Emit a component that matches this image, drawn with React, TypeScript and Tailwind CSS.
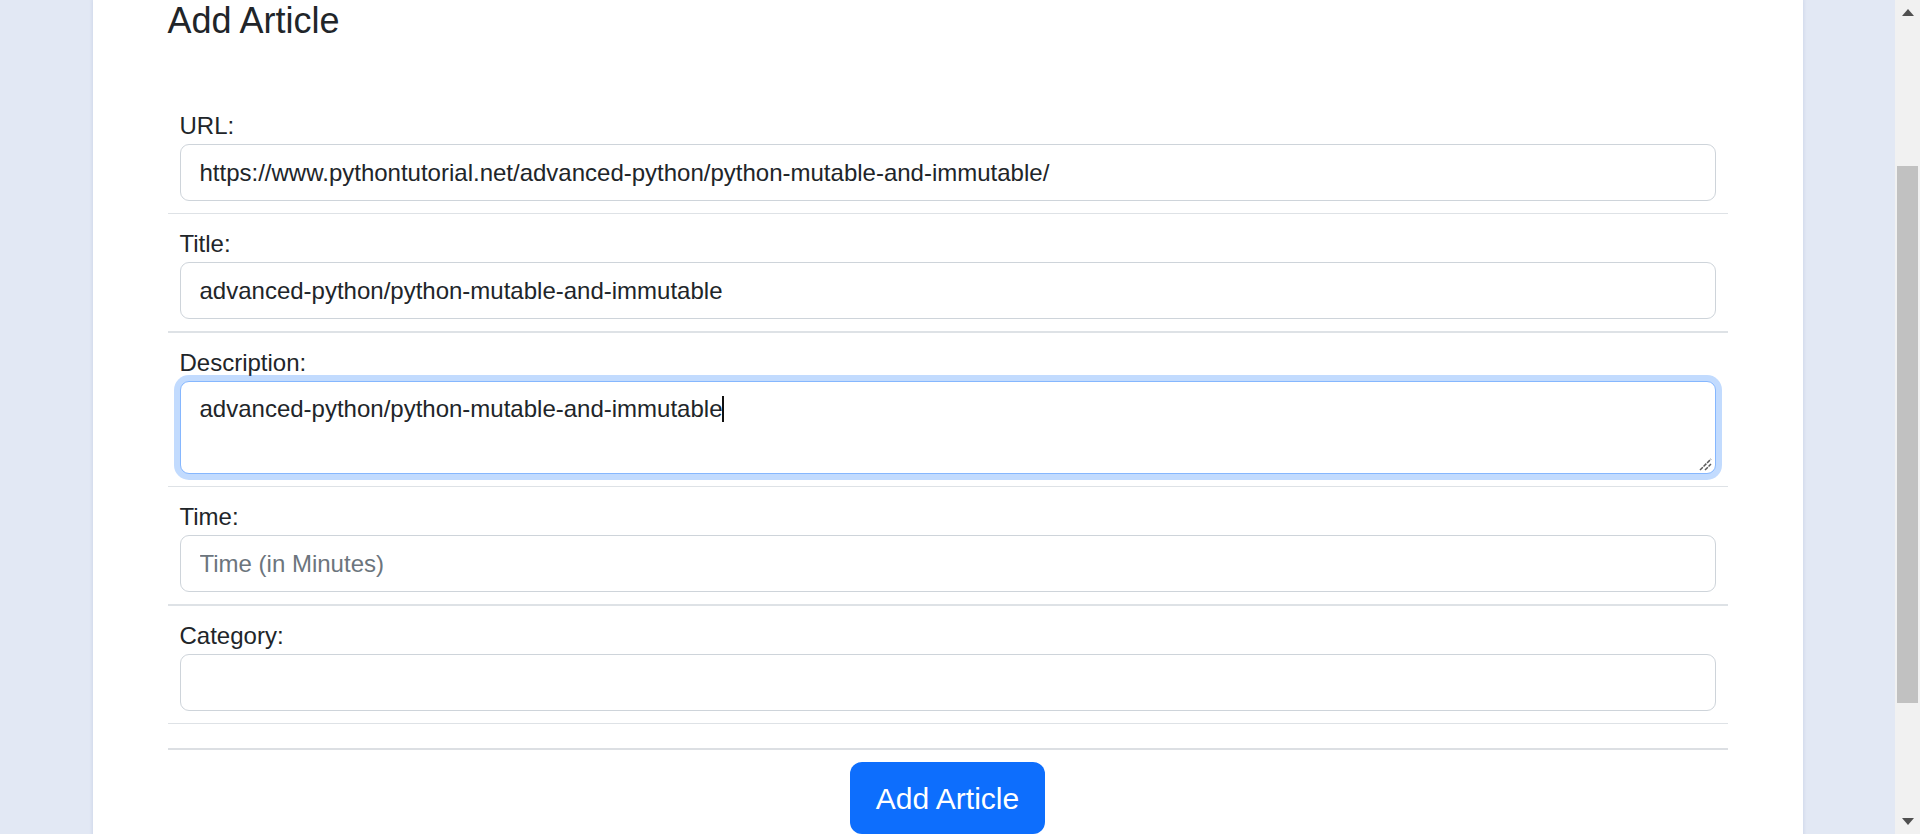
const App = () => {
  const fields = [
    {
      label: "URL:",
      value: "https://www.pythontutorial.net/advanced-python/python-mutable-and-immutable/",
      placeholder: "",
      border: "border-b",
    },
    {
      label: "Title:",
      value: "advanced-python/python-mutable-and-immutable",
      placeholder: "",
      border: "border-b-2",
    },
  ];
  const fieldsAfter = [
    { label: "Time:", value: "", placeholder: "Time (in Minutes)", border: "border-b-2" },
    { label: "Category:", value: "", placeholder: "", border: "border-b" },
  ];
  const description = "advanced-python/python-mutable-and-immutable";

  const inputClass =
    "w-full h-[57px] px-[19px] border border-[#ced4da] rounded-[9px] bg-white text-[24px] leading-[36px] text-[#212529] placeholder:text-[#6c757d] outline-none";

  return (
    <div className="h-[834px] overflow-hidden flex font-['Liberation_Sans',Arial,sans-serif] text-[#212529]">
      <div className="flex-1 bg-[#e2e8f4]">
        <div className="mx-auto w-[1710px] h-[880px] bg-white px-[75px] shadow-[0_0_4px_rgba(40,70,150,0.15)]">
          <h2 className="-mt-[1px] text-[36px] leading-[43px] font-normal mb-[54px]">Add Article</h2>

          <div className="flex flex-col">
            {fields.map((f, i) => (
              <div key={i} className={`px-[12px] pt-[12px] pb-[12px] ${f.border} border-[#dee2e6]`}>
                <label className="block text-[24px] leading-[36px]">{f.label}</label>
                <input className={inputClass} defaultValue={f.value} placeholder={f.placeholder} />
              </div>
            ))}

            <div className="px-[12px] pt-[12px] pb-[12px] border-b border-[#dee2e6]">
              <label className="block text-[24px] leading-[36px]">Description:</label>
              <div className="relative">
                <textarea
                  rows={2}
                  defaultValue={description}
                  className="block w-full h-[93px] resize-none px-[19px] py-[9px] border border-[#86b7fe] rounded-[9px] bg-white text-[24px] leading-[36px] text-[#212529] outline-none shadow-[0_0_0_6px_rgba(13,110,253,0.25)]"
                />
                <div className="absolute inset-0 px-[20px] py-[10px] text-[24px] leading-[36px] pointer-events-none">
                  <span className="invisible">{description}</span>
                  <span className="inline-block w-[2px] h-[26px] bg-[#111] align-[-5px]"></span>
                </div>
                {/* resize grip */}
                <svg
                  className="absolute right-[4px] bottom-[3px] pointer-events-none"
                  width="13"
                  height="13"
                  viewBox="0 0 13 13"
                >
                  <line x1="1" y1="12" x2="12" y2="1" stroke="#5a5a5a" strokeWidth="1.5" strokeDasharray="4 1" />
                  <line x1="6" y1="12" x2="12" y2="6" stroke="#5a5a5a" strokeWidth="1.5" strokeDasharray="4 1" />
                </svg>
              </div>
            </div>

            {fieldsAfter.map((f, i) => (
              <div key={i} className={`px-[12px] pt-[12px] pb-[12px] ${f.border} border-[#dee2e6]`}>
                <label className="block text-[24px] leading-[36px]">{f.label}</label>
                <input className={inputClass} defaultValue={f.value} placeholder={f.placeholder} />
              </div>
            ))}

            <div className="mt-[24px] border-t-2 border-[#dcdfe3]"></div>

            <div className="flex justify-center mt-[12px]">
              <button className="h-[72px] px-[26px] rounded-[12px] bg-[#0d6efd] text-white text-[30px] leading-[45px]">
                Add Article
              </button>
            </div>
          </div>
        </div>
      </div>

      {/* scrollbar */}
      <div className="w-[25px] bg-[#f1f1f1] flex flex-col">
        <div className="h-[25px] flex items-center justify-center">
          <svg width="12" height="7" viewBox="0 0 12 7">
            <polygon points="6,0 12,7 0,7" fill="#505050" />
          </svg>
        </div>
        <div className="flex-1">
          <div className="mx-[2px] mt-[141px] h-[537px] bg-[#c1c1c1]"></div>
        </div>
        <div className="h-[25px] flex items-center justify-center">
          <svg width="12" height="7" viewBox="0 0 12 7">
            <polygon points="0,0 12,0 6,7" fill="#505050" />
          </svg>
        </div>
      </div>
    </div>
  );
};

export default App;
